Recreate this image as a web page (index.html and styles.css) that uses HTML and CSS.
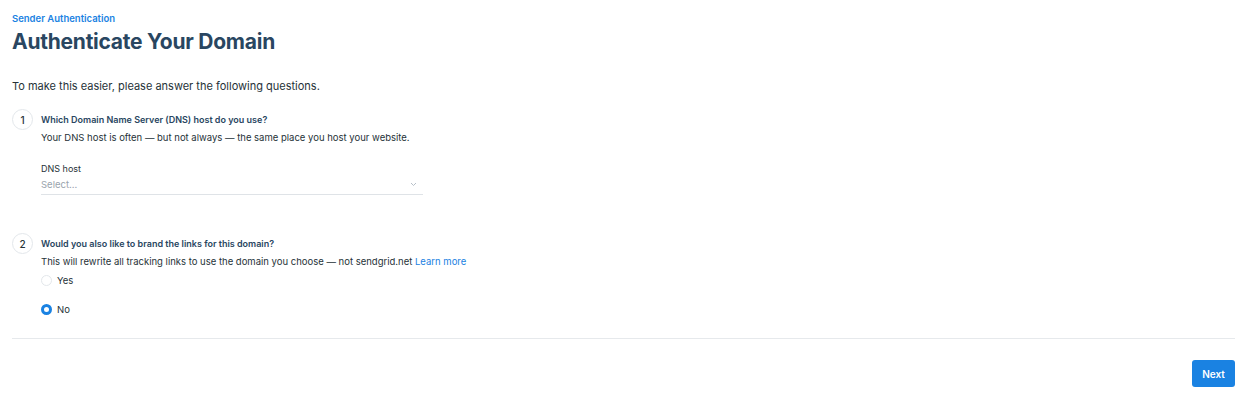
FILE: index.html
```html
<!DOCTYPE html>
<html lang="en">
<head>
    <meta charset="UTF-8">
    <title>Authenticate Your Domain</title>
    <link rel="stylesheet" href="styles.css">
</head>
<body>
    <div class="page">
        <!-- header -->
        <div class="eyebrow">Sender Authentication</div>
        <h1 class="title">Authenticate Your Domain</h1>
        <p class="intro">To make this easier, please answer the following questions.</p>

        <!-- step 1 -->
        <div class="step step-one">
            <div class="step-num">1</div>
            <div class="step-body">
                <div class="step-title">Which Domain Name Server (DNS) host do you use?</div>
                <div class="step-desc">Your DNS host is often — but not always — the same place you host your website.</div>
                <div class="field">
                    <div class="field-label">DNS host</div>
                    <div class="select">
                        <span class="placeholder">Select...</span>
                        <svg class="caret" width="7" height="5" viewBox="0 0 7 5"><path d="M1 1l2.5 2.5L6 1" fill="none" stroke="#b7c0c9" stroke-width="1"/></svg>
                    </div>
                </div>
            </div>
        </div>

        <!-- step 2 -->
        <div class="step step-two">
            <div class="step-num">2</div>
            <div class="step-body">
                <div class="step-title">Would you also like to brand the links for this domain?</div>
                <div class="step-desc">This will rewrite all tracking links to use the domain you choose — not sendgrid.net <a href="#" class="link">Learn more</a></div>
                <label class="radio">
                    <span class="radio-dot"></span>
                    <span>Yes</span>
                </label>
                <label class="radio radio-checked">
                    <span class="radio-dot"></span>
                    <span>No</span>
                </label>
            </div>
        </div>

        <div class="footer">
            <button class="btn-next">Next</button>
        </div>
    </div>
</body>
</html>
```

FILE: styles.css
```css
body {
    margin: 0;
    background: #fff;
    font-family: Inter, "Liberation Sans", Arial, sans-serif;
    color: #263238;
}

.page {
    padding: 13px 13px 0 12px;
}

.eyebrow {
    font-size: 9.5px;
    font-weight: 600;
    color: #1a82e2;
    line-height: 12px;
}

.title {
    margin: 2px 0 0;
    font-size: 21px;
    font-weight: 700;
    color: #294661;
    letter-spacing: -0.25px;
    line-height: 30px;
}

.intro {
    margin: 21px 0 0;
    font-size: 11px;
    line-height: 16px;
    color: #263238;
}

.step {
    display: flex;
    gap: 8px;
}

.step-one {
    margin-top: 15px;
}

.step-two {
    margin-top: 38px;
}

.step-num {
    width: 19px;
    height: 19px;
    border: 1px solid #e3e7eb;
    border-radius: 50%;
    display: flex;
    align-items: center;
    justify-content: center;
    font-size: 10px;
    font-weight: 500;
    color: #263238;
    flex-shrink: 0;
}

.step-body {
    padding-top: 4px;
}

.step-title {
    font-size: 9px;
    font-weight: 600;
    color: #294661;
    line-height: 14px;
}

.step-desc {
    margin-top: 4px;
    font-size: 9.5px;
    line-height: 14px;
    color: #263238;
}

.link {
    color: #1a82e2;
    text-decoration: none;
}

.field {
    margin-top: 18px;
    width: 382px;
}

.field-label {
    font-size: 9px;
    line-height: 12px;
    margin-bottom: 1px;
    color: #263238;
}

.select {
    display: flex;
    justify-content: space-between;
    align-items: center;
    height: 16px;
    border-bottom: 1px solid #dfe3e7;
    padding-bottom: 2px;
}

.placeholder {
    font-size: 9.5px;
    color: #9aa4ad;
}

.caret {
    margin-right: 6px;
}

.radio {
    display: flex;
    align-items: center;
    gap: 5px;
    font-size: 9.5px;
    color: #263238;
    margin-top: 4px;
    height: 14px;
}

.radio + .radio {
    margin-top: 15px;
}

.radio-dot {
    width: 9px;
    height: 9px;
    border: 1px solid #e3e7eb;
    border-radius: 50%;
    box-sizing: content-box;
}

.radio-checked .radio-dot {
    width: 5px;
    height: 5px;
    border: 3px solid #1a82e2;
    background: #fff;
}

.footer {
    margin-top: 22px;
    border-top: 1px solid #e6e9ec;
    display: flex;
    justify-content: flex-end;
    padding-top: 21px;
}

.btn-next {
    width: 43px;
    height: 27px;
    border: none;
    border-radius: 3px;
    background: #1a82e2;
    color: #fff;
    font-family: Inter, "Liberation Sans", Arial, sans-serif;
    font-size: 10px;
    font-weight: 600;
    padding: 0;
}
```
